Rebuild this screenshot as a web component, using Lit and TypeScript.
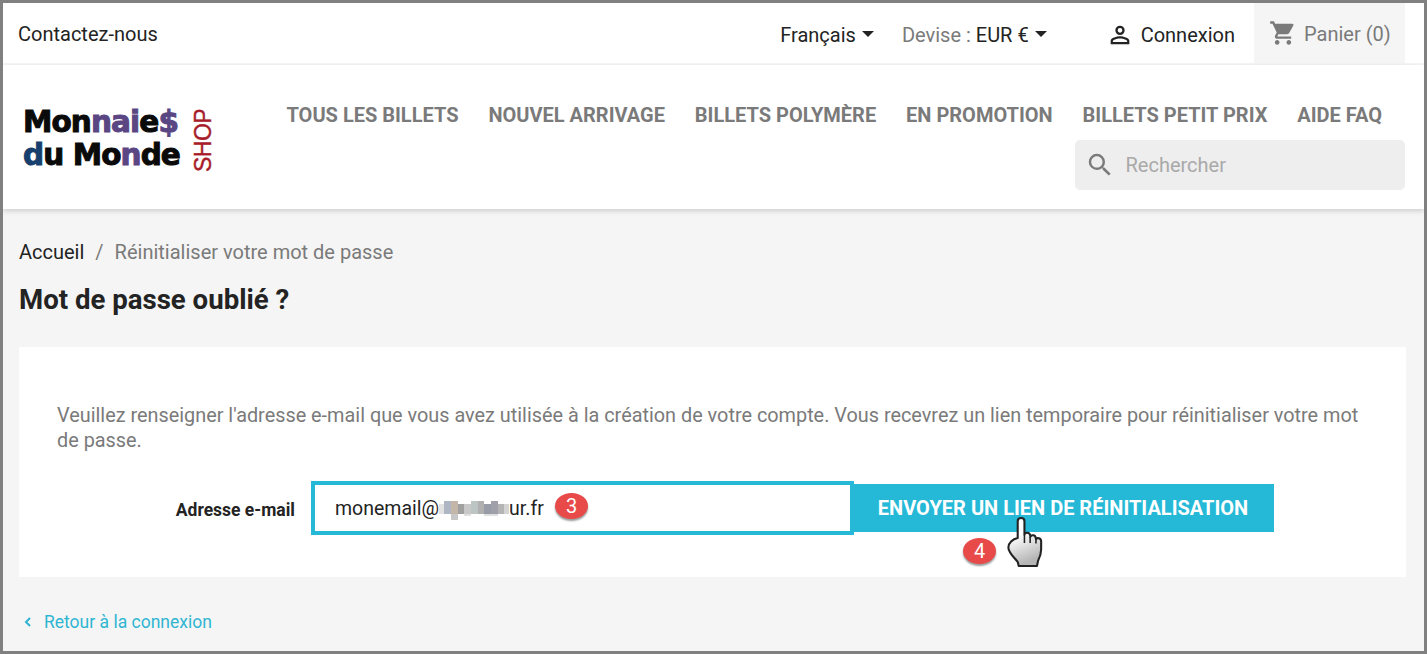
import { LitElement, html, css, svg } from "lit";
import { customElement } from "lit/decorators.js";

const BLUR: [number, number, number, number, string][] = [
  [0,3,5,10,"#e2e2e2"],[5,0,7,13,"#aeb6c4"],[12,0,7,13,"#c4b6a8"],[19,3,6,10,"#a0a0a0"],[25,3,7,10,"#c8c8c8"],
  [32,0,7,13,"#bcc4c4"],[39,0,6,13,"#b0b0b0"],[45,3,7,10,"#989ca6"],[52,0,7,13,"#a0a0aa"],[59,3,6,10,"#b4b4b4"],
  [65,3,5,10,"#d4d4d4"],[12,13,7,6,"#c8c8c8"],[25,13,7,2,"#e0e0e0"],[45,13,14,2,"#e0e0e0"],
];

@customElement("app-root")
export class AppRoot extends LitElement {
  static styles = css`
    :host { display: block; width: 1427px; height: 654px; box-sizing: border-box; border: 3px solid #808080; background: #f5f5f5; overflow: hidden; font-family: Roboto, sans-serif; color: #232323; position: relative; }
    a { color: inherit; text-decoration: none; }
    .top { height: 60px; background: #fff; display: flex; align-items: center; padding: 0 19px 0 15px; border-bottom: 2px solid #f6f6f6; font-size: 20px; }
    .contact { margin-top: 2px; }
    .spacer { flex: 1; }
    .lang, .cur, .login { display: flex; align-items: center; margin-top: 3px; }
    .caret { width: 0; height: 0; border-left: 6.500px solid transparent; border-right: 6.500px solid transparent; border-top: 6px solid #232323; margin-left: 6px; margin-top: -2px; }
    .lang { margin-right: 28px; }
    .cur { margin-right: 59px; }
    .muted { color: #7a7a7a; white-space: pre; }
    .login { margin-right: 19px; }
    .login svg { margin-right: 7px; }
    .cart { align-self: stretch; width: 151px; box-sizing: border-box; margin-bottom: -2px; background: #f5f5f5; display: flex; align-items: center; padding: 0 0 0 15px; color: #7a7a7a; }
    .cart svg { margin-right: 7px; margin-top: -3px; }
    .head { height: 144px; background: #fff; box-shadow: 0 2px 5px rgba(0,0,0,.16); display: flex; padding: 0 19px 0 20px; position: relative; }
    .logo { width: 191px; margin-top: 41px; height: 67px; display: flex; flex-shrink: 0; }
    .words { font-family: "DejaVu Sans", sans-serif; font-weight: 700; font-size: 29.5px; line-height: 33px; color: #0a0a0a; letter-spacing: -.9px; width: 169px; -webkit-text-stroke: 1px currentColor; white-space: nowrap; }
    .p { color: #5a4683; }
    .b { color: #173f6d; }
    .shop { writing-mode: vertical-rl; transform: rotate(180deg); font-family: "Liberation Sans", sans-serif; font-size: 23px; line-height: 22px; letter-spacing: -.500px; color: #a81c2a; height: 62px; text-align: center; margin-top: 4px; -webkit-text-stroke: .4px currentColor; }
    .right { flex: 1; display: flex; flex-direction: column; align-items: flex-end; }
    nav { display: flex; gap: 29.9px; margin-top: 37px; margin-right: 23px; height: 26px; align-items: center; font-size: 20px; font-weight: 700; color: #7a7a7a; white-space: nowrap; }
    .search { margin-top: 12px; width: 330px; height: 50px; box-sizing: border-box; background: #eee; border-radius: 5px; display: flex; align-items: center; padding-left: 9.500px; color: #a9a9a9; font-size: 20px; }
    .search svg { margin-right: 11px; }
    main { padding: 0 18px 0 16px; }
    .crumb { margin-top: 29px; height: 28px; display: flex; align-items: center; gap: 11px; font-size: 20px; color: #7a7a7a; white-space: pre; }
    .crumb a { color: #232323; }
    h1 { margin: 18px 0 0; font-size: 27.6px; line-height: 32px; font-weight: 700; color: #232323; }
    .card { margin-top: 31px; height: 230px; box-sizing: border-box; background: #fff; padding: 56px 38px 0; }
    .card p { margin: 0; font-size: 19.85px; line-height: 25px; color: #7a7a7a; }
    .row { display: flex; align-items: center; margin-top: 28px; position: relative; }
    label { width: 254px; padding-right: 16px; box-sizing: border-box; text-align: right; font-size: 17.5px; font-weight: 700; white-space: nowrap; position: relative; top: 2px; }
    .input { width: 543px; height: 54px; box-sizing: border-box; border: 4px solid #25b9d7; display: flex; align-items: center; padding: 0 0 0 20px; font-size: 19.5px; color: #232323; background: #fff; }
    .input svg { display: block; margin: 5px 0 0 0; }
    .btn { width: 420px; height: 48px; box-sizing: border-box; padding-right: 2px; background: #25b9d7; color: #fff; font-size: 20px; font-weight: 700; display: flex; align-items: center; justify-content: center; white-space: nowrap; }
    .badge { position: absolute; background: #e84a4a; color: #fff; width: 33px; height: 26px; border-radius: 50%; display: flex; align-items: center; justify-content: center; font-size: 20px; box-shadow: 0 2px 2px rgba(0,0,0,.4); }
    .b3 { left: 498px; top: 12px; }
    .b4 { left: 906px; top: 57px; }
    .hand { position: absolute; left: 949px; top: 36px; }
    .back { display: flex; align-items: center; margin-top: 33px; font-size: 17.5px; color: #2fb5d2; height: 24px; }
    .back svg { margin: 0 11px 0 4px; }
  `;

  render() {
    return html`
      <div class="top">
        <a class="contact" href="#">Contactez-nous</a>
        <div class="spacer"></div>
        <div class="lang">Français<span class="caret"></span></div>
        <div class="cur"><span class="muted">Devise : </span>EUR €<span class="caret"></span></div>
        <div class="login">
          <svg width="28" height="28" viewBox="0 0 24 24" fill="#232323"><path d="M12 4a4 4 0 1 1 0 8 4 4 0 0 1 0-8zm0 2a2 2 0 1 0 0 4 2 2 0 0 0 0-4zm0 7c2.700 0 8 1.300 8 4v3H4v-3c0-2.700 5.300-4 8-4zm0 1.900c-3 0-6.100 1.500-6.100 2.100v1.100h12.200V17c0-.6-3.100-2.100-6.100-2.100z"/></svg>
          Connexion
        </div>
        <div class="cart">
          <svg width="28" height="28" viewBox="0 0 24 24" fill="#7a7a7a"><path d="M7 18c-1.100 0-2 .9-2 2s.9 2 2 2 2-.9 2-2-.9-2-2-2zM1 2v2h2l3.600 7.590-1.350 2.450c-.16.280-.25.610-.25.960 0 1.100.9 2 2 2h12v-2H7.420c-.14 0-.25-.11-.25-.25l.03-.12.9-1.630h7.450c.75 0 1.410-.41 1.750-1.030l3.580-6.490A1 1 0 0 0 20 4H5.210l-.94-2H1zm16 16c-1.100 0-2 .9-2 2s.9 2 2 2 2-.9 2-2-.9-2-2-2z"/></svg>
          Panier (0)
        </div>
      </div>
      <div class="head">
        <div class="logo">
          <div class="words">Mon<span class="p">nai</span>e<span class="p">$</span><br><span class="b">d</span>u Mo<span class="p">n</span>de</div>
          <div class="shop">SHOP</div>
        </div>
        <div class="right">
          <nav>
            <a href="#">TOUS LES BILLETS</a><a href="#">NOUVEL ARRIVAGE</a><a href="#">BILLETS POLYMÈRE</a><a href="#">EN PROMOTION</a><a href="#">BILLETS PETIT PRIX</a><a href="#">AIDE FAQ</a>
          </nav>
          <div class="search">
            <svg width="30" height="30" viewBox="0 0 24 24" fill="#7a7a7a"><path d="M15.500 14h-.79l-.28-.27A6.470 6.470 0 0 0 16 9.500 6.500 6.500 0 1 0 9.500 16c1.610 0 3.090-.59 4.230-1.570l.27.280v.790l5 4.990L20.490 19l-4.990-5zm-6 0C7.010 14 5 11.990 5 9.500S7.010 5 9.500 5 14 7.010 14 9.500 11.990 14 9.500 14z"/></svg>
            Rechercher
          </div>
        </div>
      </div>
      <main>
        <div class="crumb"><a href="#">Accueil</a><span>/</span><span>Réinitialiser votre mot de passe</span></div>
        <h1>Mot de passe oublié ?</h1>
        <div class="card">
          <p>Veuillez renseigner l'adresse e-mail que vous avez utilisée à la création de votre compte. Vous recevrez un lien temporaire pour réinitialiser votre mot de passe.</p>
          <div class="row">
            <label>Adresse e-mail</label>
            <div class="input">monemail@<svg width="70" height="19" viewBox="0 0 70 19">${BLUR.map(([x, y, w, h, c]) => svg`<rect x=${x} y=${y} width=${w} height=${h} fill=${c}></rect>`)}</svg>ur.fr</div>
            <div class="btn">ENVOYER UN LIEN DE RÉINITIALISATION</div>
            <div class="badge b3">3</div>
            <div class="badge b4">4</div>
            <svg class="hand" width="40" height="56" viewBox="0 0 38 54">
              <defs><linearGradient id="g" x1="0" y1="0" x2="0.3" y2="1"><stop offset=".4" stop-color="#fff"></stop><stop offset="1" stop-color="#b5b5b5"></stop></linearGradient></defs>
              <path d="M11 4c0-4 6.500-4 6.500 0V17c.5-2.500 5-2.500 5.500 .5l.3 1.500c.7-2 4.700-2 5 .8l.3 1.500c1-1.600 5-1 5 2v8c0 5-1.500 8-3 11l-1 5H12l-1-4c-3-4-9-9-9-14 0-4 4-8 9-9z" fill="url(#g)" stroke="#222" stroke-width="2" stroke-linejoin="round"></path>
              <path d="M17.500 17v8M23 19v6M28.600 21.500v4" stroke="#222" stroke-width="1.500" fill="none"></path>
            </svg>
          </div>
        </div>
        <a class="back" href="#">
          <svg width="10" height="12" viewBox="0 0 10 12" fill="none" stroke="#2fb5d2" stroke-width="2"><path d="M7 2 3 6l4 4"></path></svg>
          Retour à la connexion
        </a>
      </main>
    `;
  }
}
